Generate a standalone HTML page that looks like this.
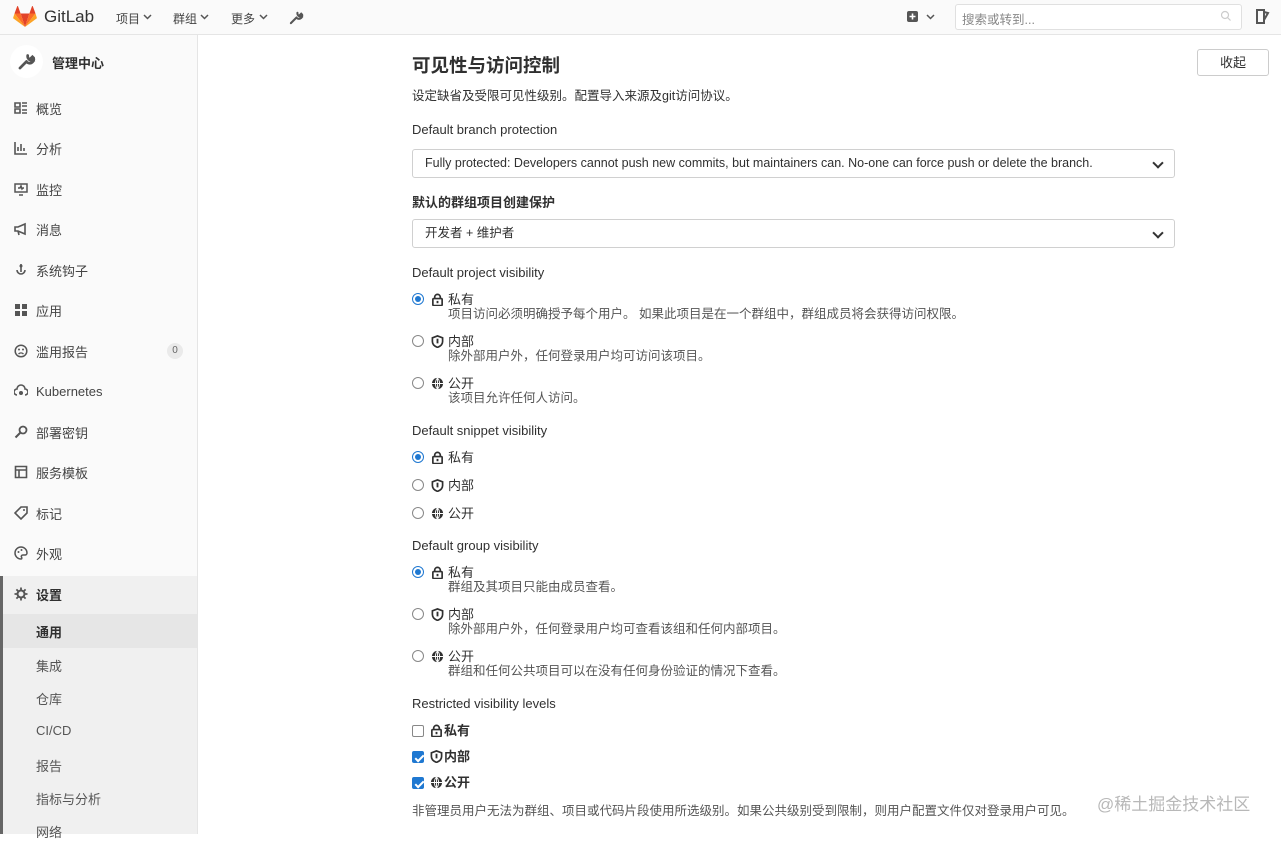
<!DOCTYPE html>
<html><head><meta charset="utf-8"><style>
*{box-sizing:border-box;margin:0;padding:0}
body{width:1281px;height:834px;overflow:hidden;background:#fff;font-family:"Liberation Sans","Noto Sans CJK SC",sans-serif;font-size:13px;color:#303030;position:relative}
.a{position:absolute;white-space:nowrap}
.hdr{position:absolute;left:0;top:0;width:1281px;height:35px;background:#fafafa;border-bottom:1px solid #e5e5e5}
.side{position:absolute;left:0;top:35px;width:198px;height:799px;background:#fafafa;border-right:1px solid #e5e5e5}
.si{position:absolute;left:14px;font-size:13px;color:#444;display:flex;align-items:center;gap:8px;height:20px}
.si svg{width:14px;height:14px}
.sub{position:absolute;left:36px;font-size:13px;color:#555}
.sel{position:absolute;left:412px;width:763px;height:29px;border:1px solid #d0d0d0;border-radius:3px;padding:0 12px;line-height:27px;font-size:12.5px;color:#303030}
.sel:after{content:"";position:absolute;right:12px;top:9px;width:6px;height:6px;border-right:2px solid #333;border-bottom:2px solid #333;transform:rotate(45deg)}
.rad{position:absolute;left:412px;width:12px;height:12px;border:1px solid #888;border-radius:50%;background:#fff}
.rad.on{border-color:#1f78d1;}
.rad.on:after{content:"";position:absolute;left:2px;top:2px;width:6px;height:6px;border-radius:50%;background:#1f78d1}
.chk{position:absolute;left:412px;width:12px;height:12px;border:1px solid #888;border-radius:2px;background:#fff}
.chk.on{background:#1f78d1;border-color:#1f78d1}
.chk.on:after{content:"";position:absolute;left:3.5px;top:0.5px;width:3px;height:7px;border-right:2px solid #fff;border-bottom:2px solid #fff;transform:rotate(45deg)}
.ic{position:absolute;width:13px;height:13px}
.t{position:absolute;left:448px;font-size:13px;color:#303030;line-height:15px;transform:translateY(1px)}
.d{position:absolute;left:448px;font-size:12.5px;color:#555;line-height:15px;transform:translateY(2px)}
.cb{position:absolute;left:444px;font-weight:bold;line-height:15px}
</style></head><body>
<div class="hdr"></div>
<svg class="a" style="left:13px;top:6px" width="24" height="22" viewBox="0 0 24 22"><path d="M12 21L16.4 7.5H7.6z" fill="#e24329"/><path d="M12 21L7.6 7.5H1.5z" fill="#fc6d26"/><path d="M1.5 7.5L0.2 11.6c-.1.4 0 .8.4 1L12 21z" fill="#fca326"/><path d="M1.5 7.5h6.1L5 .3c-.1-.4-.7-.4-.8 0z" fill="#e24329"/><path d="M12 21l4.4-13.5h6.1z" fill="#fc6d26"/><path d="M22.5 7.5l1.3 4.1c.1.4 0 .8-.4 1L12 21z" fill="#fca326"/><path d="M22.5 7.5h-6.1L19 .3c.1-.4.7-.4.8 0z" fill="#e24329"/></svg>
<div class="a" style="left:44px;top:7px;font-size:17px;color:#333">GitLab</div>
<div class="a" style="left:116px;top:10px;font-size:12px;color:#444">项目</div>
<div class="a" style="left:173px;top:10px;font-size:12px;color:#444">群组</div>
<div class="a" style="left:231px;top:10px;font-size:12px;color:#444">更多</div>
<svg class="a" style="left:143px;top:14px" width="9" height="6"><path d="M1 1l3.5 3.5L8 1" stroke="#555" stroke-width="1.5" fill="none"/></svg>
<svg class="a" style="left:200px;top:14px" width="9" height="6"><path d="M1 1l3.5 3.5L8 1" stroke="#555" stroke-width="1.5" fill="none"/></svg>
<svg class="a" style="left:259px;top:14px" width="9" height="6"><path d="M1 1l3.5 3.5L8 1" stroke="#555" stroke-width="1.5" fill="none"/></svg>
<svg class="a" style="left:289px;top:10px" width="15" height="15" viewBox="0 0 16 16"><path d="M2 14L8 8M9 3a3.5 3.5 0 0 0 4 4l-1.5-1.5L13 4l1 1a3.5 3.5 0 0 1-5 4" stroke="#555" stroke-width="2.2" fill="none" stroke-linecap="round"/></svg>
<svg class="a" style="left:907px;top:11px" width="11" height="11"><rect width="11" height="11" rx="2" fill="#555"/><path d="M5.5 2.5v6M2.5 5.5h6" stroke="#fff" stroke-width="1.6"/></svg>
<svg class="a" style="left:926px;top:14px" width="9" height="6"><path d="M1 1l3.5 3.5L8 1" stroke="#555" stroke-width="1.5" fill="none"/></svg>
<div class="a" style="left:955px;top:4px;width:287px;height:26px;background:#fff;border:1px solid #e0e0e0;border-radius:3px"></div>
<div class="a" style="left:962px;top:9px;font-size:12.5px;color:#888">搜索或转到...</div>
<svg class="a" style="left:1220px;top:10px" width="12" height="12"><circle cx="5" cy="5" r="3.5" stroke="#ccc" stroke-width="1.2" fill="none"/><path d="M7.5 7.5l3 3" stroke="#ccc" stroke-width="1.2"/></svg>
<svg class="a" style="left:1256px;top:9px" width="14" height="15"><path d="M1 1h7v13H1z" stroke="#555" stroke-width="2" fill="none"/><path d="M8 3l4 1-4 7" stroke="#555" stroke-width="2" fill="none"/></svg>

<div class="side"></div>
<div class="a" style="left:10px;top:45px;width:33px;height:33px;border-radius:50%;background:#fff"></div>
<svg class="a" style="left:17px;top:52px" width="19" height="19" viewBox="0 0 16 16"><path d="M2.5 13.5L8 8M9 3a3.5 3.5 0 0 0 4 4l-1.5-1.5L13 4l1 1a3.5 3.5 0 0 1-5 4" stroke="#555" stroke-width="2.3" fill="none" stroke-linecap="round"/></svg>
<div class="a" style="left:52px;top:53px;font-size:13px;font-weight:bold;color:#303030">管理中心</div>

<div class="si" style="top:98px"><svg viewBox="0 0 14 14"><path d="M1 2h5v4H1zM1 8h5v4H1zM8 2h5M8 5h5M8 9h5M8 12h5" stroke="#555" stroke-width="1.6" fill="none"/></svg>概览</div>
<div class="si" style="top:138px"><svg viewBox="0 0 14 14"><path d="M1 1v12h12M4 10V6M7 10V3M10 10V7" stroke="#555" stroke-width="1.6" fill="none"/></svg>分析</div>
<div class="si" style="top:179px"><svg viewBox="0 0 14 14"><path d="M1 2h12v8H1zM5 13h4M4 6h2l1-2 1 3 1-1h1" stroke="#555" stroke-width="1.5" fill="none"/></svg>监控</div>
<div class="si" style="top:219px"><svg viewBox="0 0 14 14"><path d="M1 5h3l7-3v10L4 9H1zM4 9l1 4" stroke="#555" stroke-width="1.6" fill="none"/></svg>消息</div>
<div class="si" style="top:260px"><svg viewBox="0 0 14 14"><path d="M7 1v8M3 7a4 4 0 0 0 8 0" stroke="#555" stroke-width="1.6" fill="none"/><circle cx="7" cy="3" r="1.5" fill="#555"/></svg>系统钩子</div>
<div class="si" style="top:300px"><svg viewBox="0 0 14 14"><path d="M1 1h5v5H1zM8 1h5v5H8zM1 8h5v5H1zM8 8h5v5H8z" fill="#555"/></svg>应用</div>
<div class="si" style="top:341px"><svg viewBox="0 0 14 14"><circle cx="7" cy="7" r="5.8" stroke="#555" stroke-width="1.5" fill="none"/><path d="M4.5 10c1.5-1.5 3.5-1.5 5 0" stroke="#555" stroke-width="1.3" fill="none"/><circle cx="5" cy="5.5" r="1" fill="#555"/><circle cx="9" cy="5.5" r="1" fill="#555"/></svg>滥用报告</div>
<div class="a" style="left:167px;top:343px;width:16px;height:16px;border-radius:8px;background:#eaeaea;font-size:10px;color:#666;text-align:center;line-height:16px">0</div>
<div class="si" style="top:381px"><svg viewBox="0 0 14 14"><path d="M3 11a3 3 0 0 1 0-6 4 4 0 0 1 8 0 3 3 0 0 1 0 6" stroke="#555" stroke-width="1.6" fill="none"/><circle cx="7" cy="9" r="2" fill="#555"/></svg>Kubernetes</div>
<div class="si" style="top:422px"><svg viewBox="0 0 14 14"><circle cx="9" cy="5" r="3.5" stroke="#555" stroke-width="1.8" fill="none"/><path d="M6.5 7.5L1.5 12.5" stroke="#555" stroke-width="2"/></svg>部署密钥</div>
<div class="si" style="top:462px"><svg viewBox="0 0 14 14"><path d="M1.5 1.5h11v11h-11zM1.5 5h11M5 5v7.5" stroke="#555" stroke-width="1.6" fill="none"/></svg>服务模板</div>
<div class="si" style="top:503px"><svg viewBox="0 0 14 14"><path d="M7 1h6v6l-6 6-6-6z" stroke="#555" stroke-width="1.6" fill="none"/><circle cx="10" cy="4" r="1" fill="#555"/></svg>标记</div>
<div class="si" style="top:543px"><svg viewBox="0 0 14 14"><path d="M7 1a6 6 0 1 0 0 12c1 0 1-1 .5-2s0-2 1.5-2h2a2 2 0 0 0 2-2A6 6 0 0 0 7 1z" stroke="#555" stroke-width="1.5" fill="none"/><circle cx="4.5" cy="6" r="1" fill="#555"/><circle cx="7.5" cy="4" r="1" fill="#555"/></svg>外观</div>
<div class="a" style="left:0;top:576px;width:197px;height:258px;background:#f0f0f0"></div>
<div class="a" style="left:0;top:576px;width:3px;height:258px;background:#666"></div>
<div class="a" style="left:3px;top:614px;width:194px;height:34px;background:#e6e6e6"></div>
<div class="si" style="top:584px;color:#303030;font-weight:bold"><svg viewBox="0 0 14 14"><circle cx="7" cy="7" r="3.5" stroke="#555" stroke-width="2" fill="none"/><path d="M7 0.5v3M7 10.5v3M0.5 7h3M10.5 7h3M2.4 2.4l2 2M9.6 9.6l2 2M2.4 11.6l2-2M9.6 4.4l2-2" stroke="#555" stroke-width="1.8"/></svg>设置</div>
<div class="sub" style="top:622px;color:#303030;font-weight:bold">通用</div>
<div class="sub" style="top:656px">集成</div>
<div class="sub" style="top:689px">仓库</div>
<div class="sub" style="top:723px">CI/CD</div>
<div class="sub" style="top:756px">报告</div>
<div class="sub" style="top:789px">指标与分析</div>
<div class="sub" style="top:822px">网络</div>

<div class="a" style="left:412px;top:52px;font-size:18.5px;font-weight:bold;color:#303030">可见性与访问控制</div>
<div class="a" style="left:412px;top:85px;font-size:12.5px;color:#303030">设定缺省及受限可见性级别。配置导入来源及git访问协议。</div>
<div class="a" style="left:1197px;top:49px;width:72px;height:27px;border:1px solid #ccc;border-radius:3px;text-align:center;line-height:25px;font-size:13px;color:#303030">收起</div>

<div class="a" style="left:412px;top:122px">Default branch protection</div>
<div class="sel" style="top:149px">Fully protected: Developers cannot push new commits, but maintainers can. No-one can force push or delete the branch.</div>
<div class="a" style="left:412px;top:192px;font-weight:bold">默认的群组项目创建保护</div>
<div class="sel" style="top:219px">开发者 + 维护者</div>

<svg width="0" height="0" style="position:absolute"><defs>
<symbol id="lk" viewBox="0 0 14 14"><path d="M4 6V4.5a3 3 0 0 1 6 0V6" stroke="#303030" stroke-width="1.8" fill="none"/><rect x="2" y="6" width="10" height="7.5" rx="1" stroke="#303030" stroke-width="1.8" fill="none"/><rect x="6" y="8.5" width="2" height="2.5" fill="#303030"/></symbol>
<symbol id="sh" viewBox="0 0 14 14"><path d="M7 1l5.5 2v4c0 3-2.5 5.2-5.5 6.3C4 12.2 1.5 10 1.5 7V3z" stroke="#303030" stroke-width="1.8" fill="none"/><path d="M7 4v5" stroke="#303030" stroke-width="2"/></symbol>
<symbol id="gl" viewBox="0 0 14 14"><circle cx="7" cy="7" r="6" fill="#303030"/><path d="M1 7h12M7 1v12M7 1c-3 3-3 9 0 12M7 1c3 3 3 9 0 12" stroke="#fff" stroke-width="1" fill="none"/></symbol>
</defs></svg>

<div class="a" style="left:412px;top:265px">Default project visibility</div>
<div class="rad on" style="top:293px"></div><svg class="ic" style="left:431px;top:293px"><use href="#lk"/></svg><div class="t" style="top:291px">私有</div><div class="d" style="top:305px">项目访问必须明确授予每个用户。 如果此项目是在一个群组中，群组成员将会获得访问权限。</div>
<div class="rad" style="top:335px"></div><svg class="ic" style="left:431px;top:335px"><use href="#sh"/></svg><div class="t" style="top:333px">内部</div><div class="d" style="top:347px">除外部用户外，任何登录用户均可访问该项目。</div>
<div class="rad" style="top:377px"></div><svg class="ic" style="left:431px;top:377px"><use href="#gl"/></svg><div class="t" style="top:375px">公开</div><div class="d" style="top:389px">该项目允许任何人访问。</div>

<div class="a" style="left:412px;top:423px">Default snippet visibility</div>
<div class="rad on" style="top:451px"></div><svg class="ic" style="left:431px;top:451px"><use href="#lk"/></svg><div class="t" style="top:449px">私有</div>
<div class="rad" style="top:479px"></div><svg class="ic" style="left:431px;top:479px"><use href="#sh"/></svg><div class="t" style="top:477px">内部</div>
<div class="rad" style="top:507px"></div><svg class="ic" style="left:431px;top:507px"><use href="#gl"/></svg><div class="t" style="top:505px">公开</div>

<div class="a" style="left:412px;top:538px">Default group visibility</div>
<div class="rad on" style="top:566px"></div><svg class="ic" style="left:431px;top:566px"><use href="#lk"/></svg><div class="t" style="top:564px">私有</div><div class="d" style="top:578px">群组及其项目只能由成员查看。</div>
<div class="rad" style="top:608px"></div><svg class="ic" style="left:431px;top:608px"><use href="#sh"/></svg><div class="t" style="top:606px">内部</div><div class="d" style="top:620px">除外部用户外，任何登录用户均可查看该组和任何内部项目。</div>
<div class="rad" style="top:650px"></div><svg class="ic" style="left:431px;top:650px"><use href="#gl"/></svg><div class="t" style="top:648px">公开</div><div class="d" style="top:662px">群组和任何公共项目可以在没有任何身份验证的情况下查看。</div>

<div class="a" style="left:412px;top:696px">Restricted visibility levels</div>
<div class="chk" style="top:725px"></div><svg class="ic" style="left:430px;top:724px"><use href="#lk"/></svg><div class="cb" style="top:723px">私有</div>
<div class="chk on" style="top:751px"></div><svg class="ic" style="left:430px;top:750px"><use href="#sh"/></svg><div class="cb" style="top:749px">内部</div>
<div class="chk on" style="top:777px"></div><svg class="ic" style="left:430px;top:776px"><use href="#gl"/></svg><div class="cb" style="top:775px">公开</div>
<div class="a" style="left:412px;top:800px;font-size:12.5px;color:#555">非管理员用户无法为群组、项目或代码片段使用所选级别。如果公共级别受到限制，则用户配置文件仅对登录用户可见。</div>
<div class="a" style="left:1097px;top:790px;font-size:17px;color:#b8b8b8">@稀土掘金技术社区</div>
</body></html>
